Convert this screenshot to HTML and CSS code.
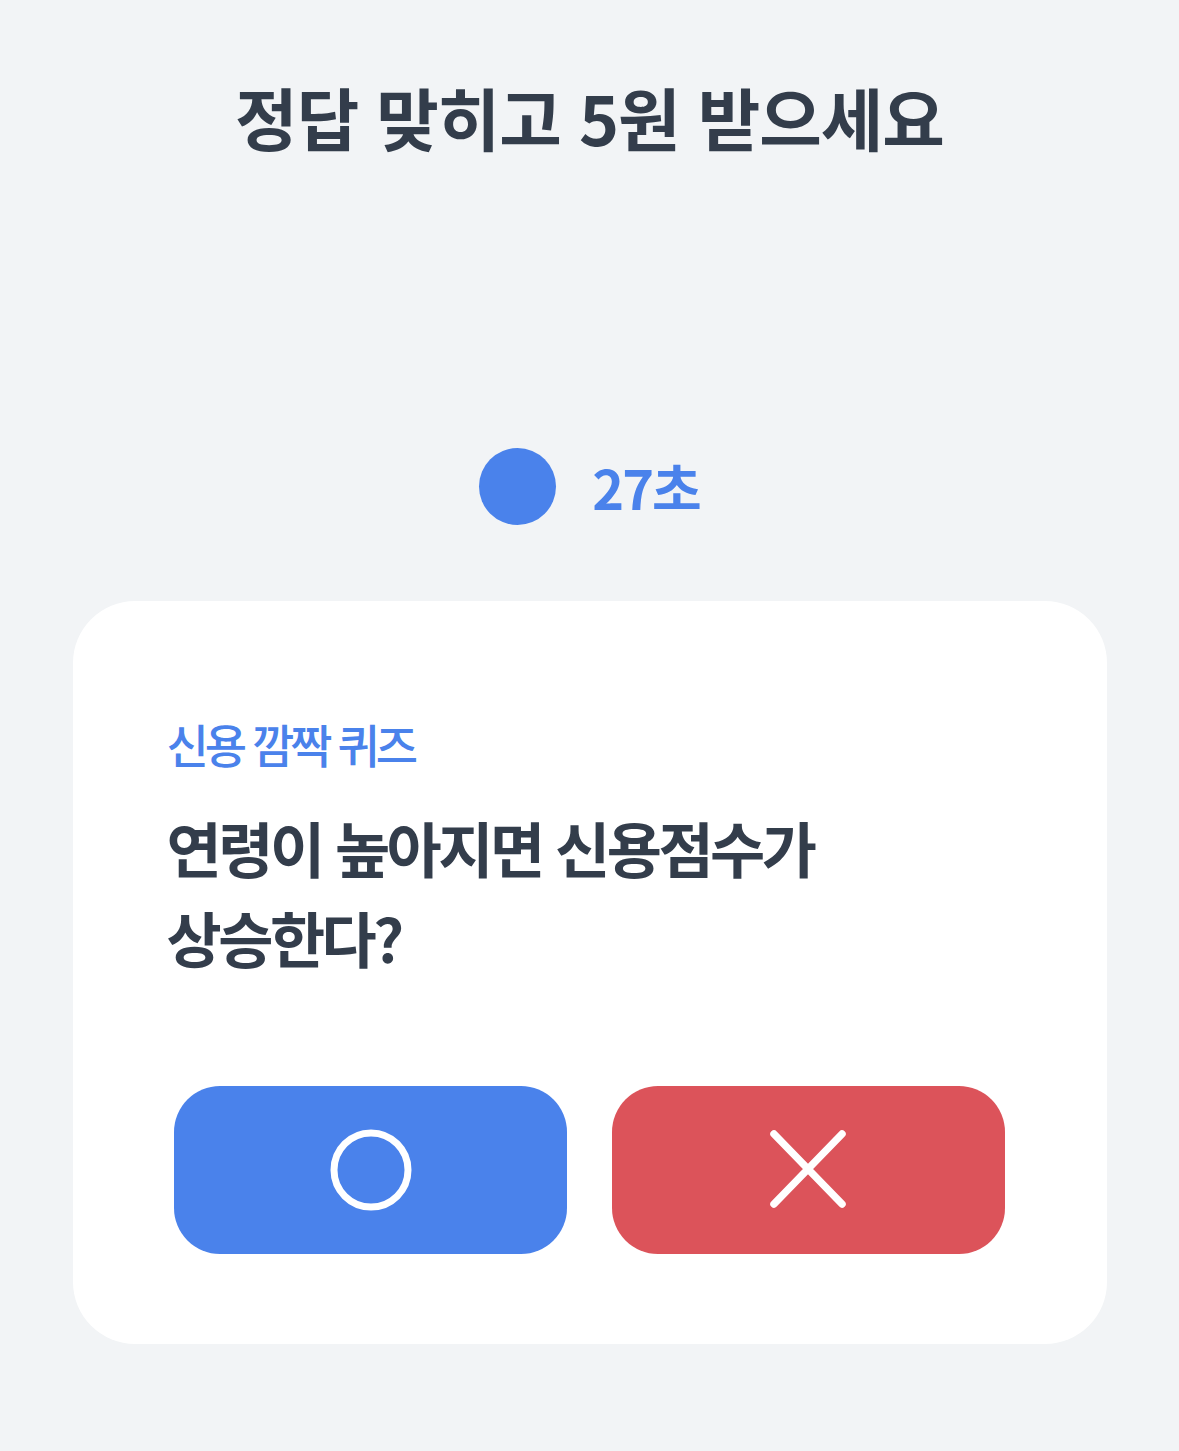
FILE: index.html
```html
<!DOCTYPE html>
<html lang="ko">
<head>
  <meta charset="UTF-8" />
  <meta name="viewport" content="width=device-width, initial-scale=1.0" />
  <title>신용 깜짝 퀴즈</title>
  <link rel="stylesheet" href="styles.css">
</head>
<body>
  <h1 class="title">정답 맞히고 5원 받으세요</h1>

  <div class="timer">
    <span class="timer-dot"></span>
    <span class="timer-text">27초</span>
  </div>

  <div class="card">
    <p class="quiz-label">신용 깜짝 퀴즈</p>
    <p class="quiz-question">연령이 높아지면 신용점수가<br>상승한다?</p>

    <div class="answers">
      <button class="answer answer-o" aria-label="O">
        <svg width="84" height="84" viewBox="0 0 84 84">
          <circle cx="42" cy="42" r="37" fill="none" stroke="#fff" stroke-width="7" />
        </svg>
      </button>
      <button class="answer answer-x" aria-label="X">
        <svg width="84" height="84" viewBox="0 0 84 84">
          <path d="M7 6 L75 76 M75 6 L7 76" stroke="#fff" stroke-width="7.5" stroke-linecap="round" fill="none" />
        </svg>
      </button>
    </div>
  </div>
</body>
</html>
```

FILE: styles.css
```css
body {
  margin: 0;
  background-color: #f2f4f6;
  font-family: 'Noto Sans CJK KR', 'Noto Sans', sans-serif;
  color: #333d4b;
  display: flex;
  flex-direction: column;
  align-items: center;
}

.title {
  margin: 69px 0 0;
  font-size: 68px;
  font-weight: 700;
  letter-spacing: -1px;
  line-height: 96px;
}

.timer {
  margin-top: 282px;
  display: flex;
  align-items: center;
  gap: 36px;
}

.timer-dot {
  width: 77px;
  height: 77px;
  border-radius: 50%;
  background-color: #4a82eb;
}

.timer-text {
  font-size: 54px;
  font-weight: 700;
  color: #4a82eb;
  letter-spacing: -2px;
}

.card {
  margin-top: 75px;
  width: 1034px;
  box-sizing: border-box;
  padding: 117px 94px 90px;
  background-color: #fff;
  border-radius: 62px;
}

.quiz-label {
  margin: 0;
  font-size: 46px;
  font-weight: 500;
  color: #4a82eb;
  letter-spacing: -4px;
  line-height: 50px;
}

.quiz-question {
  margin: 34px 0 0;
  font-size: 60px;
  font-weight: 700;
  letter-spacing: -3.5px;
  line-height: 90px;
}

.answers {
  margin-top: 104px;
  display: flex;
  justify-content: center;
  gap: 45px;
}

.answer {
  width: 393px;
  height: 168px;
  border: none;
  border-radius: 46px;
  display: flex;
  align-items: center;
  justify-content: center;
  padding: 0;
  cursor: pointer;
}

.answer-o {
  background-color: #4a82eb;
}

.answer-x {
  background-color: #dc535a;
}
```
